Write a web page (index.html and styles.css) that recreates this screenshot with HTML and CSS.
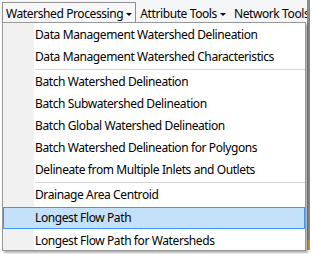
FILE: index.html
```html
<!DOCTYPE html>
<html lang="en">
<head>
  <meta charset="UTF-8">
  <meta name="viewport" content="width=device-width, initial-scale=1.0">
  <title>Watershed Processing</title>
  <link rel="stylesheet" href="styles.css">
</head>
<body>

<div class="window">
  <div class="menubar">
    <div class="top-item open">Watershed Processing <span class="arrow"></span></div>
    <div class="top-item">Attribute Tools <span class="arrow"></span></div>
    <div class="top-item">Network Tools</div>
  </div>

  <div class="dropdown">
    <div class="item">Data Management Watershed Delineation</div>
    <div class="item">Data Management Watershed Characteristics</div>
    <div class="sep"></div>
    <div class="item">Batch Watershed Delineation</div>
    <div class="item">Batch Subwatershed Delineation</div>
    <div class="item">Batch Global Watershed Delineation</div>
    <div class="item">Batch Watershed Delineation for Polygons</div>
    <div class="item">Delineate from Multiple Inlets and Outlets</div>
    <div class="sep"></div>
    <div class="item">Drainage Area Centroid</div>
    <div class="item active">Longest Flow Path</div>
    <div class="item">Longest Flow Path for Watersheds</div>
  </div>

  <!-- edge of the window behind the menu -->
  <div class="edge"></div>
  <div class="edge-tab"></div>
</div>

</body>
</html>
```

FILE: styles.css
```css
body {
  margin: 0;
  padding: 0;
  background-color: #fff;
  font-family: 'Noto Sans', 'Open Sans', sans-serif;
  font-size: 12px;
  letter-spacing: -0.4px;
  color: #000;
}

.window {
  position: relative;
  width: 313px;
  height: 254px;
  overflow: hidden;
}

.menubar {
  display: flex;
  width: 306px;
  height: 22px;
  padding-left: 2px;
  background-color: #f5f6f7;
  white-space: nowrap;
  overflow: hidden;
}

.top-item {
  display: flex;
  align-items: center;
  gap: 3px;
  height: 20px;
  margin-top: 2px;
  padding: 0 3px;
  border: 1px solid transparent;
  border-bottom: none;
}

.top-item.open {
  border-color: #8f8f8f;
  background-color: #f7f7f7;
  position: relative;
  z-index: 2;
}

.arrow {
  width: 0;
  height: 0;
  border-left: 3px solid transparent;
  border-right: 3px solid transparent;
  border-top: 3px solid #000;
  margin-top: 2px;
}

.dropdown {
  position: absolute;
  left: 2px;
  top: 22px;
  width: 302px;
  height: 226px;
  padding-top: 1px;
  overflow: hidden;
  border: 1px solid #979797;
  background: linear-gradient(to right, #f1f1f1 31px, #fff 31px);
  box-shadow: 2px 2px 2px rgba(0, 0, 0, 0.3);
  z-index: 1;
}

.item {
  height: 22px;
  line-height: 22px;
  padding-left: 32px;
  white-space: nowrap;
}

.item.active {
  height: 20px;
  line-height: 20px;
  margin-top: 1px;
  margin-bottom: 1px;
  border: 1px solid #3a98f3;
  border-left: 1px solid #3a98f3;
  background-color: #c5e0f9;
  padding-left: 31px;
}

.sep {
  height: 3px;
  margin-left: 32px;
  background: linear-gradient(#fff 1px, #d4d4d4 1px, #d4d4d4 2px, #fff 2px);
}

.edge {
  position: absolute;
  left: 307px;
  top: 0;
  width: 3px;
  height: 240px;
  background-color: #8a8a8a;
}

.edge-tab {
  position: absolute;
  left: 307px;
  top: 240px;
  width: 3px;
  height: 10px;
  background-color: #d4902e;
}
```
